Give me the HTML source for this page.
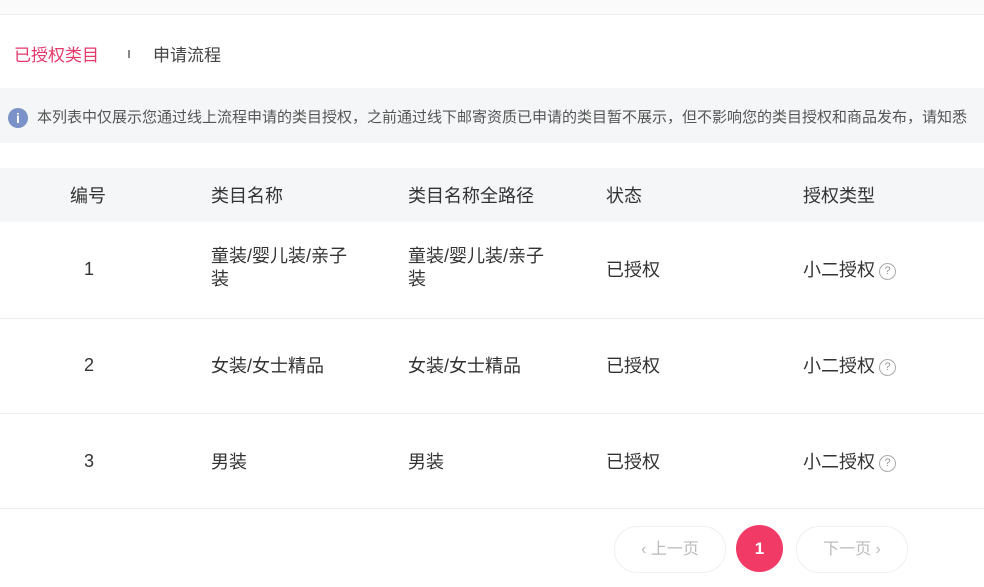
<!DOCTYPE html>
<html><head><meta charset="utf-8"><style>
body{margin:0;width:984px;height:587px;overflow:hidden;background:#fff;font-family:"Liberation Sans","Noto Sans CJK SC",sans-serif;color:#333;position:relative}
.a{position:absolute;white-space:nowrap}
.top{position:absolute;left:0;top:0;width:984px;height:14px;border-bottom:1px solid #f0f0f0;background:#fafafa}
.notice{position:absolute;left:0;top:88px;width:984px;height:55px;background:#f5f6f8}
.hdr{position:absolute;left:0;top:168px;width:984px;height:54px;background:#f5f6f8}
.line{position:absolute;left:0;width:984px;height:1px;background:#ececec}
.q{display:inline-block;width:15px;height:15px;border:1px solid #aaa;border-radius:50%;font-size:11px;line-height:15px;text-align:center;color:#999;vertical-align:2px;margin-left:4px}
.btn{position:absolute;top:526px;height:45px;border:1px solid #f0f0f0;border-radius:23px;color:#bbb;font-size:16px;line-height:45px;text-align:center}
.c{font-size:18px}
</style></head><body>
<div class="top"></div>
<div class="a" style="left:14px;top:41px;font-size:17px;color:#e4396b">已授权类目</div>
<div class="a" style="left:128px;top:50px;width:2px;height:8px;background:#888"></div>
<div class="a" style="left:153px;top:41px;font-size:17px;color:#444">申请流程</div>
<div class="notice"></div>
<div class="a" style="left:8px;top:108px;width:20px;height:20px;border-radius:50%;background:#7a92c8;color:#fff;font-size:14px;font-weight:bold;text-align:center;line-height:20px">i</div>
<div class="a" style="left:37px;top:106px;font-size:15px;color:#555">本列表中仅展示您通过线上流程申请的类目授权，之前通过线下邮寄资质已申请的类目暂不展示，但不影响您的类目授权和商品发布，请知悉</div>
<div class="hdr"></div>
<div class="a c" style="left:70px;top:182px">编号</div>
<div class="a c" style="left:211px;top:182px">类目名称</div>
<div class="a c" style="left:408px;top:182px">类目名称全路径</div>
<div class="a c" style="left:606px;top:182px">状态</div>
<div class="a c" style="left:803px;top:182px">授权类型</div>

<div class="a c" style="left:84px;top:259px">1</div>
<div class="a c" style="left:211px;top:245px;line-height:23px">童装/婴儿装/亲子<br>装</div>
<div class="a c" style="left:408px;top:245px;line-height:23px">童装/婴儿装/亲子<br>装</div>
<div class="a c" style="left:606px;top:256px">已授权</div>
<div class="a c" style="left:803px;top:256px">小二授权<span class="q">?</span></div>
<div class="line" style="top:318px"></div>

<div class="a c" style="left:84px;top:355px">2</div>
<div class="a c" style="left:211px;top:352px">女装/女士精品</div>
<div class="a c" style="left:408px;top:352px">女装/女士精品</div>
<div class="a c" style="left:606px;top:352px">已授权</div>
<div class="a c" style="left:803px;top:352px">小二授权<span class="q">?</span></div>
<div class="line" style="top:413px"></div>

<div class="a c" style="left:84px;top:451px">3</div>
<div class="a c" style="left:211px;top:448px">男装</div>
<div class="a c" style="left:408px;top:448px">男装</div>
<div class="a c" style="left:606px;top:448px">已授权</div>
<div class="a c" style="left:803px;top:448px">小二授权<span class="q">?</span></div>
<div class="line" style="top:508px"></div>

<div class="btn" style="left:614px;width:110px">‹ 上一页</div>
<div class="a" style="left:736px;top:525px;width:47px;height:47px;border-radius:50%;background:#f23a66;color:#fff;font-size:17px;font-weight:bold;text-align:center;line-height:47px">1</div>
<div class="btn" style="left:796px;width:110px">下一页 ›</div>
</body></html>
